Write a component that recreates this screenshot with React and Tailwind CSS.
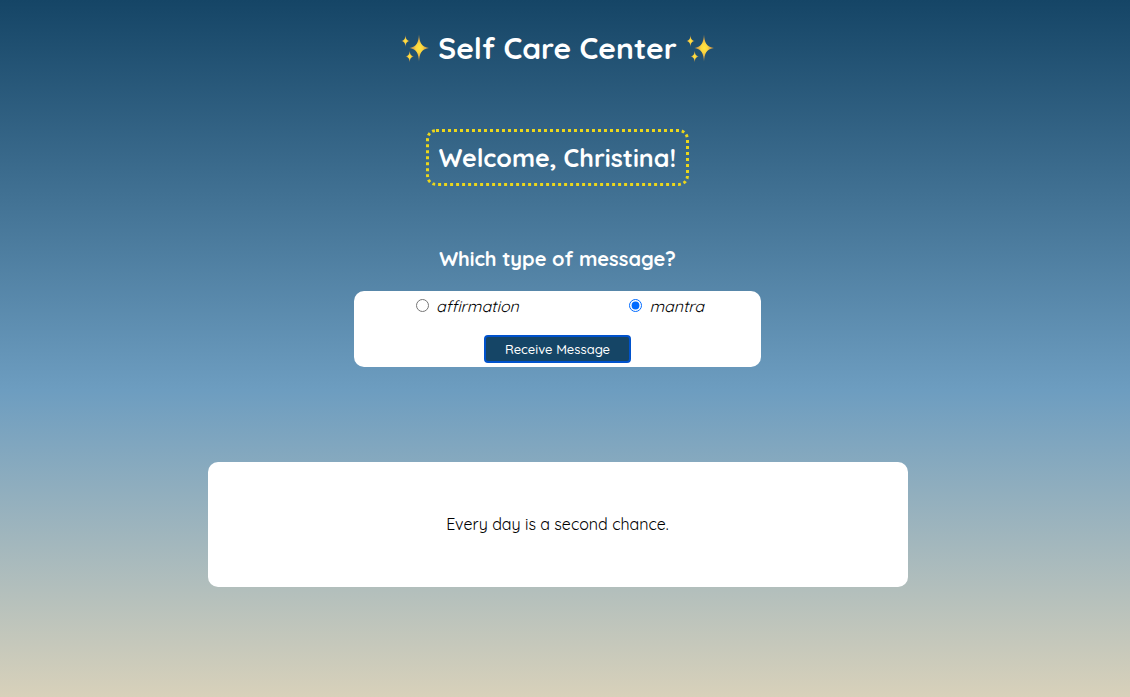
import { useState } from "react";

function Sparkles() {
  return (
    <svg className="size-[30px] shrink-0" viewBox="0 0 30 30" aria-hidden="true">
      <defs>
        <radialGradient id="spark">
          <stop offset="0" stopColor="#ffe640" />
          <stop offset="0.35" stopColor="#fbd540" />
          <stop offset="0.65" stopColor="#d8a548" />
          <stop offset="1" stopColor="#8f7f52" />
        </radialGradient>
      </defs>
      <g fill="url(#spark)">
        <path d="M19 1.500C19.700 9.500 21 13.600 29 15C21 16.400 19.700 20.500 19 28.500C18.300 20.500 17 16.400 9.500 15C17 13.600 18.300 9.500 19 1.500Z" />
        <path d="M5.500 2C5.900 6 6.500 7.300 9.700 8C6.500 8.700 5.900 10 5.500 14C5.100 10 4.500 8.700 1.300 8C4.500 7.300 5.100 6 5.500 2Z" />
        <path d="M9.700 17.500C10.100 21.500 10.700 22.800 13.900 23.500C10.700 24.200 10.100 25.500 9.700 29.500C9.300 25.500 8.700 24.200 5.500 23.500C8.700 22.800 9.300 21.500 9.700 17.500Z" />
      </g>
    </svg>
  );
}

function TypeOption({ value, selected, onSelect }) {
  return (
    <label className="flex items-center gap-[7px] text-base leading-5 italic">
      <input
        type="radio"
        name="message-type"
        value={value}
        checked={selected === value}
        onChange={() => onSelect(value)}
        className="mb-[2px] size-[13px] accent-[#006aff]"
      />
      {value}
    </label>
  );
}

export default function App() {
  const [type, setType] = useState("mantra");
  const [message, setMessage] = useState("Every day is a second chance.");

  const receive = (event) => {
    event.preventDefault();
    setMessage(type === "mantra" ? "Every day is a second chance." : "I am enough.");
  };

  return (
    <main className="flex min-h-screen flex-col items-center bg-[linear-gradient(#154566,#6d9dc0_56%,#d8d1ba)] pt-7 pr-[15px] font-['Quicksand','Lato',sans-serif] text-black">
      <h1 className="flex items-center gap-2 text-[30px] leading-10 font-bold text-white">
        <Sparkles />
        Self Care Center
        <Sparkles />
      </h1>
      <h2 className="mt-[61px] rounded-[10px] border-3 border-dotted border-[#ecd71b] p-[10px] text-[25px] leading-[31px] font-bold text-white">
        Welcome, Christina!
      </h2>
      <h3 className="mt-[60px] text-xl leading-[25px] font-bold text-white">
        Which type of message?
      </h3>
      <form
        onSubmit={receive}
        className="mt-5 flex w-full max-w-[407px] flex-col items-center rounded-[10px] bg-white pt-[5px] pb-1"
      >
        <div className="flex w-full justify-between pr-[57px] pl-[62px]">
          <TypeOption value="affirmation" selected={type} onSelect={setType} />
          <TypeOption value="mantra" selected={type} onSelect={setType} />
        </div>
        <button
          type="submit"
          className="mt-[19px] rounded border-2 border-[#0052cc] bg-[#154566] px-[19px] text-[13px] leading-6 font-medium text-white"
        >
          Receive Message
        </button>
      </form>
      <section className="mt-[95px] flex min-h-[125px] w-full max-w-[700px] items-center justify-center rounded-[10px] bg-white">
        <p className="pb-[2px] text-base leading-5">{message}</p>
      </section>
    </main>
  );
}
